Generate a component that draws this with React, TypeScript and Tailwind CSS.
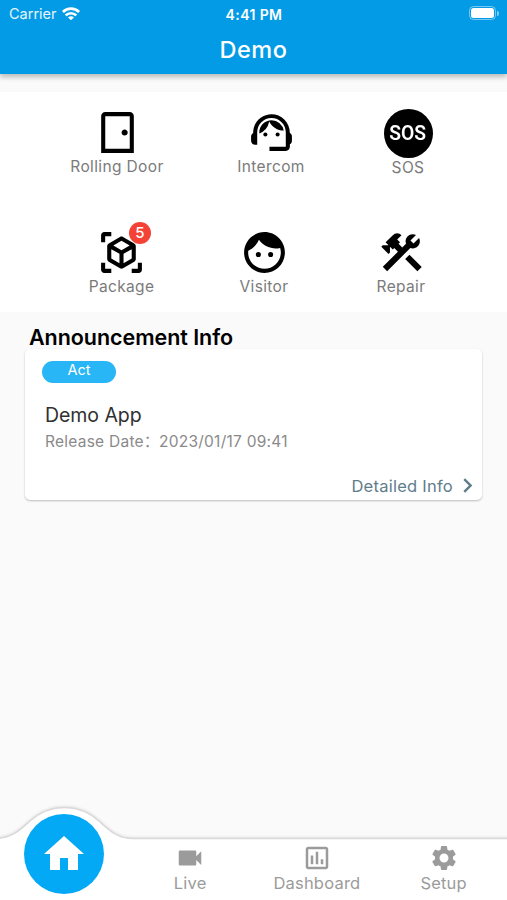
import type { ReactNode } from "react";
import {
  MdChevronRight,
  MdConstruction,
  MdFace,
  MdHome,
  MdOutlineAssessment,
  MdOutlineSensorDoor,
  MdSettings,
  MdSupportAgent,
  MdVideocam,
} from "react-icons/md";

function CubeScan() {
  return (
    <svg viewBox="0 0 24 24" className="size-[49px]" fill="currentColor">
      <path d="M17,22V20H20V17H22V20.5C22,20.89 21.84,21.24 21.54,21.54C21.24,21.84 20.89,22 20.5,22H17M7,22H3.5C3.11,22 2.76,21.84 2.46,21.54C2.16,21.24 2,20.89 2,20.5V17H4V20H7V22M17,2H20.5C20.89,2 21.24,2.16 21.54,2.46C21.84,2.76 22,3.11 22,3.5V7H20V4H17V2M7,2V4H4V7H2V3.5C2,3.11 2.16,2.76 2.46,2.46C2.76,2.16 3.11,2 3.5,2H7M13,17.25L17,14.95V10.36L13,12.66V17.25M12,10.92L16,8.63L12,6.28L8,8.63L12,10.92M7,14.95L11,17.25V12.66L7,10.36V14.95M18.23,7.59C18.73,7.91 19,8.34 19,8.91V15.23C19,15.8 18.73,16.24 18.23,16.56L12.75,19.73C12.25,20.05 11.75,20.05 11.25,19.73L5.77,16.56C5.27,16.24 5,15.8 5,15.23V8.91C5,8.34 5.27,7.91 5.77,7.59L11.25,4.41C11.5,4.28 11.75,4.22 12,4.22C12.25,4.22 12.5,4.28 12.75,4.41L18.23,7.59Z" />
    </svg>
  );
}

function Wifi() {
  return (
    <svg viewBox="0 0 18 13" className="-mt-[2px] h-[13px] w-[18px]" fill="none" stroke="white" strokeWidth="2.7">
      <path d="M0.9 5C5.4 0.6 12.6 0.6 17.1 5" />
      <path d="M3.7 8.4C6.7 5.5 11.3 5.5 14.3 8.4" />
      <path d="M9 13.2L6 10.4C7.7 8.7 10.3 8.7 12 10.4Z" fill="white" stroke="none" />
    </svg>
  );
}

function Tile({ label, className, children }: { label: string; className: string; children: ReactNode }) {
  return (
    <div className={`flex flex-col items-center ${className}`}>
      <div className="relative flex h-[49px] items-center">{children}</div>
      <span className="whitespace-nowrap text-[15.5px] leading-[19px] tracking-[0.36px] text-[#7b7b7b]">{label}</span>
    </div>
  );
}

function Tab({ label, children }: { label: string; children: ReactNode }) {
  return (
    <div className="flex flex-col items-center pt-[5px] text-[#9b9b9b]">
      {children}
      <span className="text-[16.5px] leading-5 tracking-[0.2px]">{label}</span>
    </div>
  );
}

export default function App() {
  return (
    <div className="flex h-[900px] w-[507px] flex-col overflow-hidden bg-[#fafafa] font-['Inter','Noto_Sans_CJK_SC',sans-serif]">
      <header className="z-10 h-[74px] shrink-0 bg-[#039be5] text-white shadow-[0_3px_5px_rgba(0,0,0,0.26)]">
        <div className="grid h-7 grid-cols-3 items-center pl-[9px] pr-[8px]">
          <div className="flex items-center gap-[5px] text-[14.5px]">
            <span className="text-white/90">Carrier</span>
            <Wifi />
          </div>
          <span className="text-center text-[14px] font-semibold tracking-[0.4px]">4:41 PM</span>
          <div className="-mt-[2px] flex items-center justify-end gap-px">
            <div className="h-[14px] w-[27px] rounded-[4.5px] border border-white/45 p-px">
              <div className="h-full rounded-[2.5px] bg-white" />
            </div>
            <div className="h-[5px] w-[1.5px] rounded-r bg-white/50" />
          </div>
        </div>
        <h1 className="text-center text-[23.5px] font-medium leading-[44px] tracking-[0.5px]">Demo</h1>
      </header>

      <section className="mt-[18px] h-[220px] shrink-0 bg-white pt-4 text-black">
        <div className="flex h-[120px] pl-[67px]">
          <Tile label="Rolling Door" className="w-[100px]">
            <MdOutlineSensorDoor className="size-[49px]" />
          </Tile>
          <Tile label="Intercom" className="ml-[54px] w-[100px]">
            <MdSupportAgent className="size-[49px]" />
          </Tile>
          <Tile label="SOS" className="ml-[37px] mt-px w-[100px]">
            <div className="flex size-[49px] items-center justify-center rounded-full bg-black text-white">
              <span className="scale-x-[0.94] font-['Roboto',sans-serif] text-[20.5px] font-semibold">SOS</span>
            </div>
          </Tile>
        </div>
        <div className="flex pl-[71px]">
          <Tile label="Package" className="w-[101px]">
            <CubeScan />
            <div className="absolute left-[32px] top-[-6px] flex size-[22px] items-center justify-center rounded-full bg-[#f44336] text-[15px] font-medium text-white">
              5
            </div>
          </Tile>
          <Tile label="Visitor" className="ml-[42px] w-[100px]">
            <MdFace className="size-[49px]" />
          </Tile>
          <Tile label="Repair" className="ml-[37px] w-[100px]">
            <MdConstruction className="size-[49px]" />
          </Tile>
        </div>
      </section>

      <main className="flex-1 px-[25px] pt-[13px]">
        <h2 className="pl-1 text-[21.5px] font-semibold leading-6 tracking-[-0.05px] text-black">Announcement Info</h2>
        <article className="flex h-[151px] flex-col rounded-[5px] bg-white pl-[17px] pt-3 shadow-[0_1px_2px_rgba(0,0,0,0.25)]">
          <div className="h-[22px] w-[74px] shrink-0 rounded-full bg-[#29b6f6] text-center text-[14.5px] leading-[18px] text-white">
            Act
          </div>
          <div className="mt-[19px] pl-[3px] text-[19.5px] leading-[26px] tracking-[-0.05px] text-[#303030]">Demo App</div>
          <div className="mt-px flex whitespace-nowrap pl-[3px] text-[15.5px] leading-[26px] tracking-[0.25px] text-[#8a8a8a]">
            <span className="w-[114px]">Release Date：</span>
            <span>2023/01/17 09:41</span>
          </div>
          <div className="mt-4 flex items-center justify-end text-[#607d8b]">
            <span className="text-[16.5px] leading-6 tracking-[0.25px]">Detailed Info</span>
            <MdChevronRight className="size-[29px]" />
          </div>
        </article>
      </main>

      <nav className="relative h-[62px] shrink-0">
        <svg viewBox="0 0 507 104" className="absolute bottom-0 left-0 h-[104px] w-[507px]">
          <path
            d="M-4 42.5C12 42 20 34 30 25C40 16 51 11.5 64.5 11.5C78 11.5 89 16 99 25C109 34 117 42.5 133 42.5H511V108H-4Z"
            className="fill-white stroke-[#d9d9d9] stroke-[1.6] drop-shadow-[0_-1px_1px_rgba(0,0,0,0.08)]"
          />
        </svg>
        <div className="relative grid grid-cols-4">
          <div className="-mt-6 flex justify-center pl-[2px]">
            <div className="flex size-20 items-center justify-center rounded-full bg-[#03a9f4] text-white">
              <MdHome className="size-12" />
            </div>
          </div>
          <Tab label="Live">
            <MdVideocam className="size-[30px]" />
          </Tab>
          <Tab label="Dashboard">
            <MdOutlineAssessment className="size-[30px]" />
          </Tab>
          <Tab label="Setup">
            <MdSettings className="size-[30px]" />
          </Tab>
        </div>
      </nav>
    </div>
  );
}
